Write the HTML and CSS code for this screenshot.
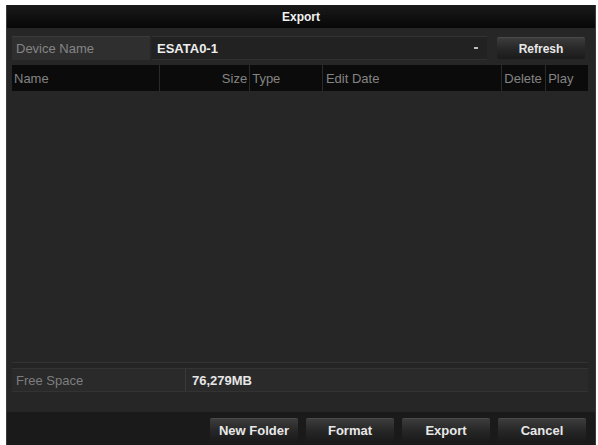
FILE: index.html
```html
<!DOCTYPE html>
<html lang="en">
  <head>
    <meta charset="UTF-8" />
    <title>Export</title>
    <link rel="stylesheet" href="styles.css">
  </head>
  <body>
    <div class="panel">
      <div class="titlebar">Export</div>

      <div class="content">
        <div class="device-row">
          <div class="label-box">Device Name</div>
          <div class="select-box">
            <span class="value">ESATA0-1</span>
            <span class="arrow"></span>
          </div>
          <button class="btn refresh">Refresh</button>
        </div>

        <div class="file-table">
          <div class="table-head">
            <div class="col col-name">Name</div>
            <div class="col col-size">Size</div>
            <div class="col col-type">Type</div>
            <div class="col col-date">Edit Date</div>
            <div class="col col-delete">Delete</div>
            <div class="col col-play">Play</div>
          </div>
          <div class="table-body"></div>
        </div>

        <div class="separator"></div>

        <div class="free-row">
          <div class="free-label">Free Space</div>
          <div class="free-value">76,279MB</div>
        </div>
      </div>

      <div class="footer">
        <button class="btn">New Folder</button>
        <button class="btn">Format</button>
        <button class="btn">Export</button>
        <button class="btn">Cancel</button>
      </div>
    </div>
  </body>
</html>
```

FILE: styles.css
```css
* {
  margin: 0;
  padding: 0;
  box-sizing: border-box;
  font-family: "Liberation Sans", Arial, sans-serif;
}

body {
  background-color: #ffffff;
  padding: 5px 2px 0 6px;
  font-size: 13px;
}

.panel {
  width: 590px;
  height: 440px;
  background-color: #262626;
  display: flex;
  flex-direction: column;
  border-left: 1px solid #3a3a3a;
  border-right: 1px solid #3a3a3a;
}

.titlebar {
  height: 23px;
  background: linear-gradient(#1a1a1a, #070707);
  color: #f2f2f2;
  font-weight: bold;
  font-size: 12px;
  display: flex;
  align-items: center;
  justify-content: center;
}

.content {
  flex: 1;
  padding: 8px 7px 0 5px;
  display: flex;
  flex-direction: column;
}

/* Ligne du périphérique */
.device-row {
  height: 24px;
  display: flex;
  align-items: center;
}

.label-box {
  width: 138px;
  height: 24px;
  background-color: #2f2f2f;
  border-top: 1px solid #3a3a3a;
  color: #858585;
  padding-left: 4px;
  display: flex;
  align-items: center;
}

.select-box {
  width: 335px;
  height: 24px;
  margin-left: 2px;
  background-color: #222222;
  border-top: 1px solid #333333;
  border-bottom: 1px solid #303030;
  display: flex;
  align-items: center;
  justify-content: space-between;
  padding: 0 9px 0 5px;
}

.value {
  color: #eeeeee;
  font-weight: bold;
}

.arrow {
  width: 4px;
  height: 2px;
  background-color: #bdbdbd;
}

.btn {
  width: 88px;
  height: 23px;
  border: none;
  border-top: 1px solid #4a4a4a;
  border-radius: 2px;
  background: linear-gradient(#3c3c3c, #262626 55%, #1b1b1b);
  color: #e8e8e8;
  font-weight: bold;
  font-size: 13px;
  font-family: "Liberation Sans", Arial, sans-serif;
}

.refresh {
  margin-left: 10px;
  height: 22px;
  font-size: 12px;
}

/* Tableau des fichiers */
.file-table {
  margin-top: 5px;
  flex: 1;
  display: flex;
  flex-direction: column;
}

.table-head {
  height: 26px;
  background-color: #0b0b0b;
  display: flex;
  color: #848484;
}

.col {
  display: flex;
  align-items: center;
  border-right: 1px solid #2a2a2a;
  padding: 0 2px;
  white-space: nowrap;
  overflow: hidden;
}

.col-name { width: 149px; }
.col-size { width: 90px; justify-content: flex-end; }
.col-type { width: 73px; }
.col-date { width: 180px; padding-left: 3px; }
.col-delete { width: 44px; }
.col-play { width: 42px; border-right: none; }

.table-body {
  flex: 1;
  background-color: #262626;
}

.separator {
  height: 7px;
  border-top: 1px solid #333333;
  border-bottom: 1px solid #343434;
  background-color: #242424;
}

.free-row {
  height: 23px;
  display: flex;
  background-color: #2a2a2a;
  border-bottom: 1px solid #333333;
}

.free-label {
  width: 174px;
  color: #7e7e7e;
  padding-left: 4px;
  display: flex;
  align-items: center;
  border-right: 1px solid #3a3a3a;
}

.free-value {
  color: #e6e6e6;
  font-weight: bold;
  padding-left: 6px;
  display: flex;
  align-items: center;
}

.footer {
  margin-top: 20px;
  height: 33px;
  background-color: #1a1a1a;
  display: flex;
  justify-content: flex-end;
  align-items: flex-start;
  gap: 8px;
  padding: 6px 9px 0 0;
}
```
